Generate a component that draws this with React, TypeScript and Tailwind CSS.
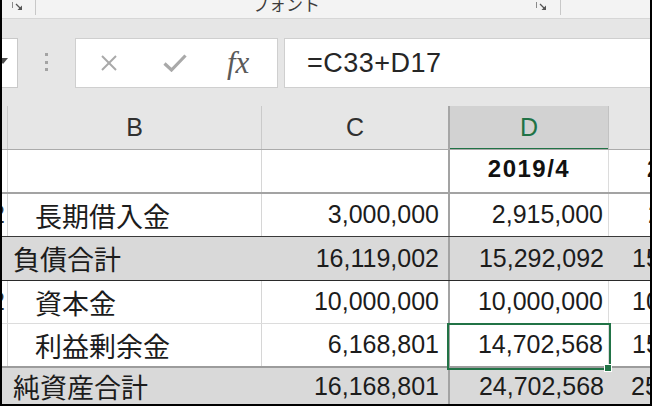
import React from "react";

const Launcher = () => (
  <svg width="11" height="9" viewBox="0 0 11 9" className="block">
    <line x1="0.5" y1="0" x2="0.5" y2="6" stroke="#8a8a8a" strokeWidth="1" />
    <line x1="4" y1="2" x2="9" y2="7" stroke="#555" strokeWidth="1.2" />
    <polygon points="10,3.5 10,8 5.5,8" fill="#555" />
  </svg>
);

type Row = {
  gray?: boolean;
  label?: string;
  indent?: boolean;
  c?: string;
  d?: string;
  e?: string;
  epl?: string;
  rownum?: boolean;
  bottom: string;
  h: string;
  selected?: boolean;
};

const rows: Row[] = [
  { label: "長期借入金", indent: true, c: "3,000,000", d: "2,915,000", e: "2,830,000", epl: "pl-[39px]", rownum: true, bottom: "border-b border-b-[#3a3a3a]", h: "h-[43px]" },
  { gray: true, label: "負債合計", c: "16,119,002", d: "15,292,092", e: "15,207,092", epl: "pl-[23px]", bottom: "border-b border-b-[#2a2a2a]", h: "h-[44px]" },
  { label: "資本金", indent: true, c: "10,000,000", d: "10,000,000", e: "10,000,000", epl: "pl-[23px]", rownum: true, bottom: "border-b border-b-[#dcdcdc]", h: "h-[43px]" },
  { label: "利益剰余金", indent: true, c: "6,168,801", d: "14,702,568", e: "15,517,568", epl: "pl-[23px]", bottom: "border-b-2 border-b-[#9c9c9c]", h: "h-[44px]", selected: true },
  { gray: true, label: "純資産合計", c: "16,168,801", d: "24,702,568", e: "25,517,568", epl: "pl-[22px]", bottom: "", h: "flex-1" },
];

export default function App() {
  return (
    <div className="w-[652px] h-[406px] bg-black px-[2px] pb-[2px]">
      <div className="relative w-full h-full bg-white overflow-hidden flex flex-col font-['Liberation_Sans','Noto_Sans_CJK_JP',sans-serif] text-[#1c1c1c]">
        {/* Ribbon strip */}
        <div className="h-[19px] shrink-0 bg-[#f3f3f3] border-b border-[#d6d6d6] flex items-start overflow-hidden">
          <div className="w-[10px] shrink-0" />
          <div className="mt-[2px] shrink-0"><Launcher /></div>
          <div className="w-[12px] shrink-0" />
          <div className="w-px h-[15px] bg-[#c8c8c8] shrink-0" />
          <div className="w-[500px] shrink-0 flex justify-center">
            <span className="text-[17px] leading-none -mt-[5px] text-[#3c3c3c] font-['Noto_Sans_CJK_JP',sans-serif]">フォント</span>
          </div>
          <div className="mt-[2px] shrink-0"><Launcher /></div>
          <div className="w-[13px] shrink-0" />
          <div className="w-px h-[15px] bg-[#c8c8c8] shrink-0" />
        </div>

        {/* Formula bar */}
        <div className="h-[87px] shrink-0 bg-[#e6e6e6] pt-[19px] flex items-start">
          <div className="w-[16px] h-[50px] shrink-0 bg-white border-y border-r border-[#c9c9c9] overflow-hidden relative">
            <svg width="8" height="8" viewBox="0 0 8 8" className="absolute left-0 top-[19px]">
              <polygon points="-4,0 6,0 1,6" fill="#4d4d4d" />
            </svg>
          </div>
          <div className="w-[57px] h-[50px] shrink-0 flex flex-col items-start pl-[27px] pt-[15px] gap-[4.5px]">
            <div className="w-[3px] h-[3px] bg-[#a3a3a3]" />
            <div className="w-[3px] h-[3px] bg-[#a3a3a3]" />
            <div className="w-[3px] h-[3px] bg-[#a3a3a3]" />
          </div>
          <div className="w-[203px] h-[50px] shrink-0 bg-white border border-[#cfcfcf] flex items-center">
            <svg width="16" height="16" viewBox="0 0 16 16" className="ml-[25px]">
              <line x1="1" y1="1" x2="15" y2="15" stroke="#a9a9a9" strokeWidth="2" />
              <line x1="15" y1="1" x2="1" y2="15" stroke="#a9a9a9" strokeWidth="2" />
            </svg>
            <svg width="24" height="18" viewBox="0 0 24 18" className="ml-[46px]">
              <path d="M1.5 9.5 L8.5 16 L22.5 1.5" fill="none" stroke="#a9a9a9" strokeWidth="3.2" />
            </svg>
            <span className="ml-[40px] text-[31px] italic leading-none text-[#5a5a5a] font-['Liberation_Serif',serif] -mt-[2px]">fx</span>
          </div>
          <div className="w-[6px] shrink-0" />
          <div className="flex-1 h-[50px] bg-white border-y border-l border-[#cfcfcf] flex items-center pl-[22px]">
            <span className="text-[27px] tracking-[0.5px] text-[#262626] leading-none">=C33+D17</span>
          </div>
        </div>

        {/* Column headers */}
        <div className="h-[44px] shrink-0 flex bg-[#e6e6e6] border-b border-[#ababab] overflow-hidden">
          <div className="w-[6px] shrink-0 border-r border-[#cacaca]" />
          <div className="w-[254px] shrink-0 border-r border-[#cacaca] flex items-center justify-center text-[25px] text-[#303030]">B</div>
          <div className="w-[188px] shrink-0 border-r-2 border-[#a6a6a6] flex items-center justify-center text-[25px] text-[#303030]">C</div>
          <div className="relative w-[159px] shrink-0 bg-[#d2d2d2] border-r border-[#c2c2c2] flex items-center justify-center text-[25px] text-[#217346]">
            D
            <div className="absolute left-0 right-0 -bottom-px h-[2px] bg-[#217346]" />
          </div>
          <div className="flex-1" />
        </div>

        {/* Row 1 */}
        <div className="h-[44px] shrink-0 flex border-b-2 border-[#a3a3a3] overflow-hidden">
          <div className="w-[6px] shrink-0 border-r border-[#d6d6d6]" />
          <div className="w-[254px] shrink-0 border-r border-[#d6d6d6]" />
          <div className="w-[188px] shrink-0 border-r-2 border-[#a3a3a3]" />
          <div className="w-[159px] shrink-0 border-r border-[#dcdcdc] flex items-center justify-center pb-[4px] text-[24px] font-bold tracking-[1.5px] text-[#111]">2019/4</div>
          <div className="flex-1 flex items-center pl-[38px] pb-[4px] text-[24px] font-bold tracking-[1.5px] text-[#111] whitespace-nowrap overflow-hidden">2019/5</div>
        </div>

        {rows.map((r, i) => (
          <div
            key={i}
            className={`relative ${r.h} shrink-0 flex ${r.bottom} ${r.gray ? "bg-[#d9d9d9]" : "bg-white"} text-[25px]`}
          >
            <div className={`w-[6px] shrink-0 overflow-hidden flex items-center ${r.gray ? "" : "border-r border-[#d6d6d6]"}`}>
              {r.rownum && <span className="-ml-[11px] text-[25px] text-[#333]">2</span>}
            </div>
            <div className={`w-[254px] shrink-0 flex items-center ${r.indent ? "pl-[27px]" : "pl-[5px]"} ${r.gray ? "" : "border-r border-[#d6d6d6]"}`}>
              <span className="text-[27px] font-['Noto_Sans_CJK_JP',sans-serif] leading-none">{r.label}</span>
            </div>
            <div className="w-[188px] shrink-0 border-r-2 border-[#a3a3a3] flex items-center justify-end pr-[9px]">{r.c}</div>
            <div className={`w-[159px] shrink-0 flex items-center justify-end pr-[5px] ${r.gray ? "" : "border-r border-[#dcdcdc]"}`}>{r.d}</div>
            <div className={`flex-1 flex items-center ${r.epl} whitespace-nowrap overflow-hidden`}>{r.e}</div>
            {r.selected && (
              <>
                <div className="absolute left-[445px] -top-px w-[164px] h-[47px] border-2 border-[#217346] z-10" />
                <div className="absolute left-[602px] top-[40px] w-[8px] h-[8px] bg-[#217346] border border-white z-20" />
              </>
            )}
          </div>
        ))}
      </div>
    </div>
  );
}
